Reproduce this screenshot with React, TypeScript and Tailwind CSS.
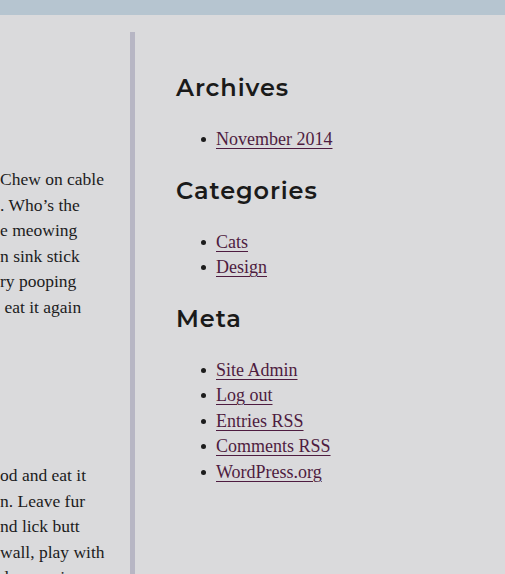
import React from "react";

const serif = "font-['Liberation_Serif',Georgia,serif]";

const para1 = ["Chew on cable", ". Who\u2019s the", "e meowing", "n sink stick", "ry pooping", "\u00a0eat it again"];
const para2 = ["od and eat it", "n. Leave fur", "nd lick butt", "wall, play with", "d\u00a0\u00a0meowing"];

function Section({ title, items }: { title: string; items: string[] }) {
  return (
    <div className="mb-[23px]">
      <h2 className="font-['Montserrat','Open_Sans',sans-serif] font-semibold text-[24px] leading-[30px] text-[#1a1a1a] tracking-[0.9px]">
        {title}
      </h2>
      <ul className="mt-[24px] pl-[25px]">
        {items.map((t) => (
          <li key={t} className={`${serif} text-[18px] leading-[25.5px] text-[#1c1c1c] flex items-center`}>
            <span className="w-[5px] h-[5px] rounded-full bg-[#1c1c1c] mr-[10px] shrink-0" />
            <a href="#" className="text-[#4e1c40] underline decoration-[#4e1c40] underline-offset-[3px] decoration-1">
              {t}
            </a>
          </li>
        ))}
      </ul>
    </div>
  );
}

export default function App() {
  return (
    <div className="w-[505px] h-[574px] overflow-hidden bg-[#dadadc]">
      <div className="h-[15px] bg-[#b6c5d0]" />
      <div className="flex">
        <div className={`w-[130px] overflow-hidden ${serif} text-[17.5px] leading-[25.5px] text-[#1c1c1c] pt-[152px]`}>
          {para1.map((l) => (
            <div key={l} className="whitespace-nowrap">{l}</div>
          ))}
          <div className="h-[143px]" />
          {para2.map((l) => (
            <div key={l} className="whitespace-nowrap">{l}</div>
          ))}
        </div>
        <div className="w-[5px] mt-[17px] bg-[#b7b6c4] self-stretch min-h-[560px]" />
        <div className="pl-[41px] pt-[58px]">
          <Section title="Archives" items={["November 2014"]} />
          <Section title="Categories" items={["Cats", "Design"]} />
          <Section title="Meta" items={["Site Admin", "Log out", "Entries RSS", "Comments RSS", "WordPress.org"]} />
        </div>
      </div>
    </div>
  );
}
